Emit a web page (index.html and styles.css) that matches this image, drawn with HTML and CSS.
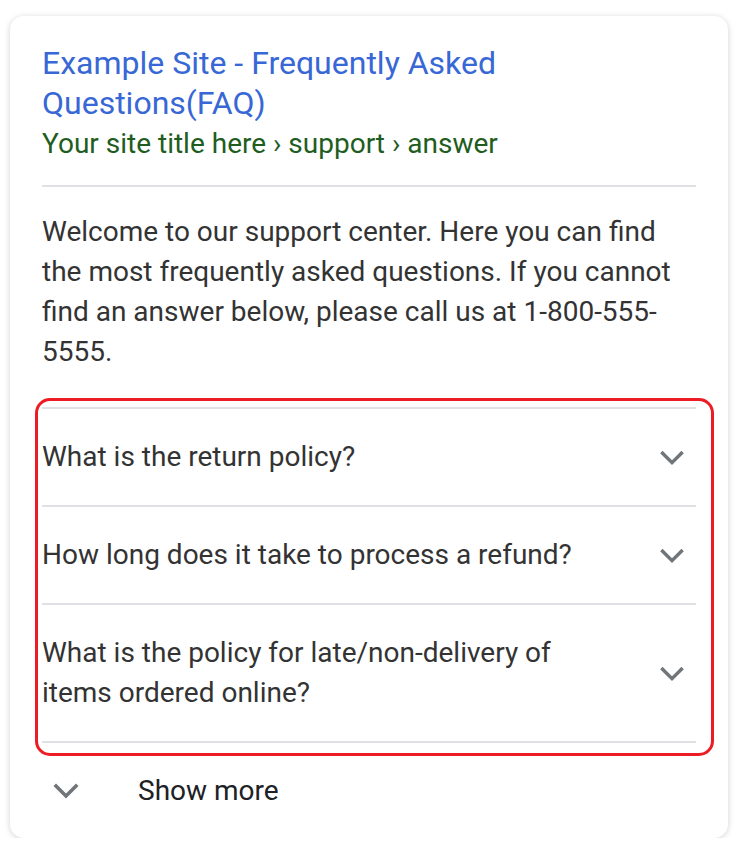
FILE: index.html
```html
<!DOCTYPE html>
<html>
<head>
<meta charset="utf-8">
<link rel="stylesheet" href="styles.css">
</head>
<body>
<div class="card">
  <div class="head">
    <a class="title">Example Site - Frequently Asked Questions(FAQ)</a>
    <div class="crumb">Your site title here › support › answer</div>
  </div>
  <p class="intro">Welcome to our support center. Here you can find the most frequently asked questions. If you cannot find an answer below, please call us at 1-800-555-5555.</p>
  <div class="faq">
    <div class="q"><span class="qt">What is the return policy?</span><svg class="chev" viewBox="0 0 24 24"><path d="M4.5 8.5l7.5 7.5 7.5-7.5" /></svg></div>
    <div class="q"><span class="qt">How long does it take to process a refund?</span><svg class="chev" viewBox="0 0 24 24"><path d="M4.5 8.5l7.5 7.5 7.5-7.5" /></svg></div>
    <div class="q"><span class="qt">What is the policy for late/non-delivery of items ordered online?</span><svg class="chev" viewBox="0 0 24 24"><path d="M4.5 8.5l7.5 7.5 7.5-7.5" /></svg></div>
  </div>
  <div class="more"><svg class="chev small" viewBox="0 0 24 24"><path d="M4.5 8.5l7.5 7.5 7.5-7.5" /></svg><span>Show more</span></div>
</div>
</body>
</html>
```
FILE: styles.css
```css
html, body { margin: 0; padding: 0; background: #fff; }
body { font-family: Roboto, "Liberation Sans", sans-serif; }
.card {
  margin: 16px 0 0 10px;
  width: 718px;
  height: 822px;
  box-sizing: border-box;
  background: #fff;
  border-radius: 14px;
  box-shadow: 0 1px 6px rgba(0,0,0,0.18);
  padding: 0 32px;
}
.head { padding-top: 27px; border-bottom: 2px solid #dfe1e5; padding-bottom: 21px; }
.title { display: block; color: #3867d6; font-size: 32px; line-height: 40px; width: 480px; }
.crumb { margin-top: 1px; color: #1e5d1e; font-size: 28px; line-height: 40px; }
.intro { margin: 25px 0 0 0; color: #333; font-size: 28px; line-height: 40px; }
.faq {
  margin: 26px -18px 0 -7px;
  border: 3px solid #ed1c24;
  border-radius: 15px;
  padding: 6px 15px 10px 4px;
}
.q {
  display: flex;
  align-items: center;
  justify-content: space-between;
  border-top: 2px solid #dfe1e5;
  color: #333;
  font-size: 28px;
  line-height: 40px;
}
.q:nth-child(1), .q:nth-child(2) { height: 96px; }
.q:nth-child(3) { height: 136px; border-bottom: 2px solid #dfe1e5; }
.qt { width: 570px; }
.chev { width: 34px; height: 34px; flex: none; fill: none; stroke: #70757a; stroke-width: 2.4; margin-right: 7px; }
.more { display: flex; align-items: center; height: 68px; font-size: 28px; color: #202124; }
.more .chev { width: 36px; height: 36px; margin-left: 6px; margin-right: 54px; }
```
